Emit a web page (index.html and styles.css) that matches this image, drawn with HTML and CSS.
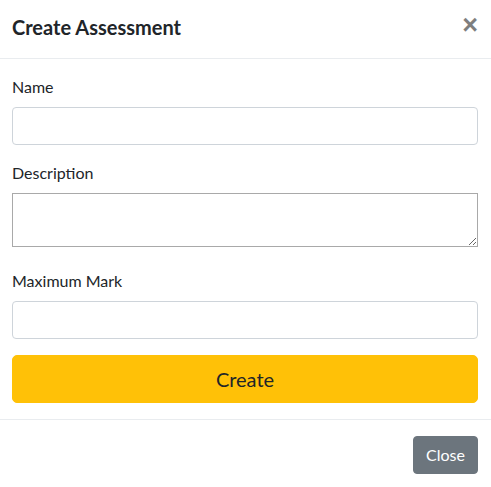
FILE: index.html
```html
<!DOCTYPE html>
<html lang="en">
<head>
<meta charset="utf-8">
<title>Create Assessment</title>
<link rel="stylesheet" href="styles.css">
</head>
<body>
<div class="modal-content">
  <div class="modal-header">
    <h5 class="modal-title">Create Assessment</h5>
    <button type="button" class="close" aria-label="Close">&times;</button>
  </div>
  <div class="modal-body">
    <form class="form">
      <div class="form-group">
        <label class="label" for="name">Name</label>
        <input class="form-control" id="name" type="text">
      </div>
      <div class="form-group form-group-textarea">
        <label class="label" for="desc">Description</label>
        <textarea class="textarea" id="desc"></textarea>
      </div>
      <div class="form-group">
        <label class="label" for="mark">Maximum Mark</label>
        <input class="form-control" id="mark" type="text">
      </div>
      <button type="button" class="btn-create">Create</button>
    </form>
  </div>
  <div class="modal-footer">
    <button type="button" class="btn-close">Close</button>
  </div>
</div>
</body>
</html>
```

FILE: styles.css
```css
html, body {
  margin: 0;
  padding: 0;
  overflow: hidden;
  background: #fff;
}

body {
  font-family: "Lato", "Open Sans", sans-serif;
  font-size: 16px;
  line-height: 1.5;
  color: #212529;
}

.modal-content {
  box-sizing: border-box;
  width: 500px;
  margin: -5px 0 0 -5px;
  border: 1px solid rgba(0, 0, 0, 0.2);
  background: #fff;
  display: flex;
  flex-direction: column;
}

.modal-header {
  display: flex;
  align-items: flex-start;
  justify-content: space-between;
  padding: 16px;
  border-bottom: 1px solid #e9ecef;
}

.modal-title {
  margin: 0;
  font-size: 20px;
  font-weight: 700;
  line-height: 1.5;
  color: #212529;
}

.close {
  padding: 16px 16px 16px 16px;
  margin: -16px -16px -16px auto;
  background: transparent;
  border: 0;
  font-family: "Liberation Sans", sans-serif;
  font-size: 27px;
  font-weight: 700;
  line-height: 1;
  color: #000;
  opacity: 0.5;
  text-shadow: 0 1px 0 #fff;
  cursor: pointer;
}

.modal-body {
  padding: 16px;
}

.form {
  display: flex;
  flex-direction: column;
}

.form-group {
  display: flex;
  flex-direction: column;
  margin-bottom: 16px;
}

.form-group-textarea {
  margin-bottom: 22px;
}

.label {
  display: block;
  margin-bottom: 8px;
}

.form-control {
  box-sizing: border-box;
  display: block;
  width: 100%;
  height: 38px;
  padding: 6px 12px;
  font: inherit;
  color: #495057;
  background: #fff;
  border: 1px solid #ced4da;
  border-radius: 4px;
}

.textarea {
  box-sizing: border-box;
  display: block;
  width: 100%;
  height: 54px;
  margin: 0;
  padding: 2px;
  font: inherit;
  border: 1px solid #a9a9a9;
  border-radius: 0;
  background: #fff;
}

.btn-create {
  display: block;
  width: 100%;
  height: 48px;
  padding: 8px 16px;
  font: inherit;
  font-size: 20px;
  line-height: 1.5;
  color: #212529;
  background: #ffc107;
  border: 1px solid #ffc107;
  border-radius: 5px;
  cursor: pointer;
}

.modal-footer {
  display: flex;
  justify-content: flex-end;
  align-items: center;
  padding: 12px;
  border-top: 1px solid #e9ecef;
}

.btn-close {
  margin: 4px;
  height: 38px;
  padding: 6px 12px;
  font: inherit;
  line-height: 1.5;
  color: #fff;
  background: #6c757d;
  border: 1px solid #6c757d;
  border-radius: 4px;
  cursor: pointer;
}
```
